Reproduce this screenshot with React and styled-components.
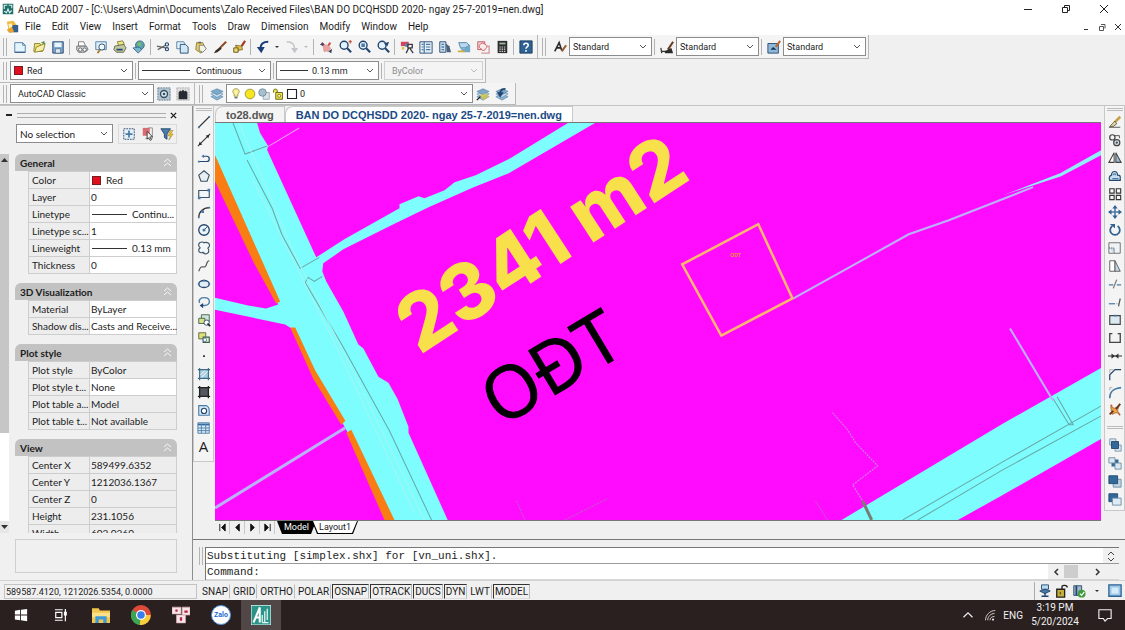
import React from "react";
import styled, { createGlobalStyle } from "styled-components";

const GlobalStyle = createGlobalStyle`
  * {
    box-sizing: border-box;
  }
  body {
    margin: 0;
    background: #f0f0f0;
    color: #1c1c1c;
    font-family: Roboto, "Open Sans", "Noto Sans", sans-serif;
    font-size: 10px;
  }
  button,
  select,
  input {
    font: inherit;
    color: inherit;
    margin: 0;
    padding: 0;
    border: 0;
    background: none;
    border-radius: 0;
  }
  svg {
    display: block;
    flex: none;
  }
`;

/* ---------- icons, all drawn on a 16 x 16 grid ---------- */

const navy = "#24466e";
const steel = "#4a7ba6";
const sky = "#b9dcf2";
const gold = "#c9b23a";

const layersShape = (
  <>
    <path d="M1 11l7-3 7 3-7 4z" fill="#8fb4cf" stroke={steel} strokeWidth=".6" />
    <path d="M1 8l7-3 7 3-7 4z" fill="#c4dcec" stroke={steel} strokeWidth=".6" />
    <path d="M1 5l7-3 7 3-7 4z" fill="#7ea8c6" stroke={steel} strokeWidth=".6" />
  </>
);

const glass = (
  <>
    <circle cx="7" cy="6" r="4.5" fill="#e3f2fc" stroke={navy} strokeWidth="1.6" />
    <path d="M10.5 9.5L15 14" stroke={navy} strokeWidth="2.4" />
  </>
);

const icons = {
  app: (
    <>
      <path d="M1 1h14v14H1z" fill="#1f6e68" />
      <path d="M3 8V3h4M9 3h4v4M3 11l3 2 2-5 2 5 3-3" fill="none" stroke="#d9f1ee" strokeWidth="1.5" />
    </>
  ),
  drawing: (
    <>
      <path d="M1 2l8-1 5 6v8H4z" fill="#efb93f" />
      <path d="M8 6h7v9H5z" fill="#34618f" />
      <path d="M1 12l6-4 3 6-6 2z" fill="#e9a22f" />
      <path d="M3 5l4-1 1 4-4 2z" fill="#fff3bd" />
    </>
  ),
  new: (
    <>
      <path d="M2 3h9l3 3v8H2z" fill="#e3f4fb" stroke={steel} />
      <path d="M2 14h12" stroke={navy} />
      <path d="M11 3v3h3" fill="none" stroke={steel} />
    </>
  ),
  open: (
    <>
      <path d="M3 4h6l1 2h3l-1 7H2z" fill="#eadf79" stroke="#8a7f22" />
      <path d="M5 8l10-4-2 8-10 2z" fill="#f5efab" stroke="#8a7f22" />
      <path d="M10 3l4-2 1 4z" fill="#56913e" />
    </>
  ),
  save: (
    <>
      <path d="M2 2h12v13H2z" fill="#7fa8d0" stroke={navy} />
      <path d="M4 3h8v5H4z" fill="#eaf4fb" />
      <path d="M5 10h6v5H5z" fill="#dfe6ec" stroke={navy} strokeWidth=".6" />
    </>
  ),
  print: (
    <>
      <path d="M4 2h6l2 5H4z" fill="#fff" stroke="#777" />
      <path d="M2 7h11l2 4-4 3H4l-2-3z" fill="#d5d9dd" stroke="#666" />
      <circle cx="6" cy="11" r="2" fill="#fff" stroke="#555" />
      <circle cx="11" cy="11" r="2" fill="#fff" stroke="#555" />
    </>
  ),
  preview: (
    <>
      <path d="M2 2h12v9H2z" fill="#dceffa" stroke={steel} />
      <circle cx="9" cy="8" r="3.5" fill="#f4fbff" stroke={navy} />
      <path d="M7 11l-3 4" stroke="#b07a33" strokeWidth="2" />
    </>
  ),
  publish: (
    <>
      <path d="M5 2l6-1 2 4-6 3z" fill="#efe58a" stroke="#7e7520" />
      <path d="M2 7l10-2 3 4-3 5H4l-3-3z" fill="#c2c8a4" stroke="#5c6040" />
      <path d="M4 11h7" stroke={navy} strokeWidth="2" />
    </>
  ),
  globe: (
    <>
      <circle cx="9" cy="6" r="5" fill="#5b9fb5" stroke="#376c77" />
      <path d="M6 4l3-2 2 3-3 3z" fill="#7dbf69" />
      <path d="M1 9l7-1 3 3-4 4z" fill="#78b7cd" stroke={navy} strokeWidth=".7" />
    </>
  ),
  cut: (
    <>
      <path d="M1 7l10 2M2 11l9-5" stroke="#666" strokeWidth="1.5" />
      <circle cx="12.5" cy="5" r="1.8" fill="none" stroke={navy} strokeWidth="1.3" />
      <circle cx="12.5" cy="10.5" r="1.8" fill="none" stroke={navy} strokeWidth="1.3" />
    </>
  ),
  copy: (
    <>
      <path d="M2 2h8l1 2v6H2z" fill="#e4f3fb" stroke={steel} />
      <path d="M6 5h6l3 3v7H6z" fill="#cfe6f4" stroke={navy} />
    </>
  ),
  paste: (
    <>
      <path d="M3 3h7l3 7-5 5-6-4z" fill="#e3cf6a" stroke="#8a7a2b" />
      <path d="M6 6h5l3 4-4 4-4-2z" fill="#f2f4e4" stroke="#777" />
      <path d="M5 2h3v2H5z" fill="#666" />
    </>
  ),
  brush: (
    <>
      <path d="M15 2L8 9" stroke="#8c4a22" strokeWidth="2.4" />
      <path d="M8 8l2 2-5 4-4 1 2-3z" fill="#3b2c22" />
    </>
  ),
  match: (
    <>
      <path d="M15 1l-4 6" stroke="#a63a25" strokeWidth="2.6" />
      <path d="M4 6l7 1 1 4-6 1z" fill="#e9bf45" stroke="#5e4d16" strokeWidth=".8" />
      <path d="M2 9h5v5H2z" fill="#efd977" stroke="#5e4d16" />
    </>
  ),
  undo: (
    <>
      <path d="M14 2C8 2 5 5 5 10" fill="none" stroke="#1e3d78" strokeWidth="2.4" />
      <path d="M1 8h9l-4 7z" fill="#1e3d78" />
    </>
  ),
  redo: (
    <>
      <path d="M2 2c6 0 9 3 9 8" fill="none" stroke="#c2c5c9" strokeWidth="1.8" />
      <path d="M7 9h8l-4 6z" fill="#c2c5c9" />
    </>
  ),
  pan: (
    <>
      <path d="M3 3l10 10M13 3L6 13" stroke="#d05454" strokeWidth="2.4" />
      <path d="M4 6l5-1 5 4-3 5-6-2z" fill="#e9a3a0" />
      <path d="M1 5l4-2v4zM15 10l-4 3 3 2z" fill={navy} />
    </>
  ),
  zoomRt: (
    <>
      {glass}
      <path d="M12 2h4M14 0v4" stroke="#c9503a" strokeWidth="1.3" />
    </>
  ),
  zoomWin: (
    <>
      {glass}
      <path d="M5 4h4v4H5z" fill={steel} />
    </>
  ),
  zoomPrev: (
    <>
      {glass}
      <path d="M15 2L9 4l4 3z" fill={navy} />
    </>
  ),
  props: (
    <>
      <path d="M1 2h9v5H1z" fill="#d2455c" />
      <path d="M2 8h3v3H2z" fill="#ddc34a" />
      <path d="M6 4h3v4H6z" fill="#5587c7" />
      <path d="M9 5h5v4H9zM10 9l-3 6M11 9l4 6" fill="none" stroke="#3b3f45" strokeWidth="1.5" />
    </>
  ),
  center: (
    <>
      <path d="M1 2h14v13H1z" fill="#e6eff5" stroke={navy} />
      <path d="M6 2v13M8 5h5M8 8h5M8 11h5M3 5h2M3 8h2M3 11h2" stroke={steel} strokeWidth="1.4" />
    </>
  ),
  palettes: (
    <>
      <path d="M2 2h7v12H2z" fill="#cfe1ee" stroke={navy} />
      <path d="M4 5h3M4 8h3M4 11h3" stroke={steel} strokeWidth="1.5" />
      <path d="M9 4l4 3 2 7h-5z" fill="#4a617a" />
    </>
  ),
  sheets: (
    <>
      <path d="M2 3h9l3 3-5 3H4z" fill="#b9d8ea" stroke={steel} />
      <path d="M3 8l5 2 7-5v9H7z" fill="#6fa8cb" />
      <path d="M1 13h8" stroke="#d1ad3e" strokeWidth="2" />
    </>
  ),
  markup: (
    <>
      <path d="M2 2h8v9H2z" fill="#f3d5d7" stroke="#c1505a" />
      <path d="M5 5c1-2 4-2 5 0 3 0 3 4 1 5-1 3-5 2-5 0-3-1-3-4-1-5z" fill="#fbeaea" stroke="#c1505a" />
      <path d="M12 7h3v8H6" fill="none" stroke="#d4969a" strokeWidth="1.5" />
    </>
  ),
  calc: (
    <>
      <path d="M3 1h11v14H3z" fill="#2d2d2d" />
      <path d="M5 3h7v2H5z" fill="#9fb7a3" />
      <path d="M5 8h7M5 10.5h7M5 13h7" stroke="#d2d2d2" strokeDasharray="1.6 1" strokeWidth="1.4" />
    </>
  ),
  help: (
    <>
      <path d="M1 1h14v14H1z" fill="#2d6293" stroke="#17395e" />
      <path d="M5.5 6c0-3 5-3 5 0 0 2-2.5 1.8-2.5 4M8 11.5v2" fill="none" stroke="#fff" strokeWidth="1.8" />
    </>
  ),
  textStyle: (
    <>
      <path d="M2 13L7 3l3 9M4 9h5" fill="none" stroke="#2a2a2a" strokeWidth="1.8" />
      <path d="M15 6l-5 7" stroke="#9b5a31" strokeWidth="2.4" />
    </>
  ),
  dimStyle: (
    <>
      <path d="M1 13h8M1 9l1 6" stroke="#333" strokeWidth="1.4" />
      <path d="M15 2L9 11" stroke="#6c3e27" strokeWidth="2.4" />
      <path d="M5 13l8-4 2 6H6z" fill="#2a2a2a" />
    </>
  ),
  tableStyle: (
    <>
      <path d="M1 4h12v11H1z" fill="#8fb8d8" stroke={navy} />
      <path d="M4 11l3-3 4 3z" fill="#16324f" />
      <path d="M15 1l-5 7" stroke="#b56c35" strokeWidth="2.4" />
    </>
  ),
  gear: (
    <>
      <path d="M1 1h14v14H1z" fill="#b6c6d1" stroke="#5c7588" strokeDasharray="2 1" />
      <circle cx="8" cy="8" r="4" fill="#dfeaf1" stroke="#354f63" strokeWidth="1.6" />
      <circle cx="8" cy="8" r="1.5" fill="#354f63" />
    </>
  ),
  workspace: (
    <>
      <path d="M1 1h14v14H1z" fill="#ddd" stroke="#a7a7a7" strokeDasharray="2 1" />
      <path d="M3 6l2-2 1 1 2-2 2 2 1-1 2 2v8H3z" fill="#262b31" />
    </>
  ),
  layers: layersShape,
  layerPrev: (
    <>
      {layersShape}
      <path d="M4 9l8-2 3 4-7 4z" fill="#d4c64a" opacity=".8" />
      <path d="M1 15l4-4" stroke="#222" strokeWidth="1.6" />
    </>
  ),
  layerBack: (
    <>
      {layersShape}
      <path d="M12 2C8 2 6 4 6 7" fill="none" stroke={navy} strokeWidth="2" />
      <path d="M2 6h8l-4 6z" fill={navy} />
    </>
  ),
  bulb: (
    <>
      <path d="M8 1c5 0 5 5 2.5 7v3h-5V8C3 6 3 1 8 1z" fill="#fbf39a" stroke="#8b8330" />
      <path d="M6 13h4" stroke="#777" strokeWidth="2" />
    </>
  ),
  sun: <circle cx="8" cy="8" r="6.5" fill="#f5e620" stroke="#8b8330" />,
  freeze: (
    <>
      <path d="M7 6h8v9H7z" fill="#dbe4ea" stroke="#8a98a2" />
      <circle cx="6" cy="6" r="5" fill="#a8bfce" stroke="#637f93" />
    </>
  ),
  unlock: (
    <>
      <path d="M2 6V3c0-2 5-2 5 0v3M5 6h9v9H5z" fill="#ece24b" stroke="#6f6a1a" strokeWidth="1.3" />
      <circle cx="9.5" cy="10.5" r="2" fill="#fff9b0" stroke="#6f6a1a" />
    </>
  ),
  box: <path d="M2 2h12v12H2z" fill="#fff" stroke="#222" strokeWidth="1.5" />,
  pickAdd: (
    <>
      <path d="M2 2h12v12H2z" fill="#e5f1f8" stroke={navy} strokeDasharray="2 1" />
      <path d="M8 4v8M4 8h8" stroke={steel} strokeWidth="2" />
    </>
  ),
  pick: (
    <>
      <path d="M2 1h8v9H2z" fill="#d34b53" opacity=".8" />
      <path d="M8 1h5v12H5" fill="none" stroke="#888" />
      <path d="M7 5l6 6-3 .5 2 3-1.5.8-2-3L7 14z" fill="#f8f8f8" stroke="#333" />
    </>
  ),
  quick: (
    <>
      <path d="M1 2h11l-4 6v6l-3-2V8z" fill={steel} stroke={navy} />
      <path d="M12 4l-3 6h3l-2 5 5-7h-3l3-4z" fill="#f1c232" stroke="#8a6b10" strokeWidth=".5" />
    </>
  ),
  line: (
    <>
      <path d="M2 14L14 2" stroke="#333" strokeWidth="1.3" />
      <path d="M1 13h2v2H1zM13 1h2v2h-2z" fill={steel} />
    </>
  ),
  xline: (
    <>
      <path d="M1 15L15 1" stroke="#333" strokeWidth="1.3" />
      <path d="M3 10l3 3-4 1zM10 3l3 3 1-4z" fill="#222" />
    </>
  ),
  pline: (
    <>
      <path d="M2 12h9c4 0 4-6 0-6H8" fill="none" stroke={navy} strokeWidth="1.4" />
      <path d="M1 11h2v2H1zM8 4v4L5 6z" fill={steel} />
    </>
  ),
  polygon: <path d="M8 2l6 5-2.5 7h-7L2 7z" fill="#e7eff4" stroke="#3c5264" strokeWidth="1.3" />,
  rect: (
    <>
      <path d="M2 4h12v8H2z" fill="#f2f7fa" stroke="#3c5264" strokeWidth="1.3" />
      <path d="M1 11h3v3H1zM12 2h3v3h-3z" fill={steel} />
    </>
  ),
  arc: (
    <>
      <path d="M2 14C2 8 7 3 14 3" fill="none" stroke="#333" strokeWidth="1.4" />
      <path d="M1 13h2v2H1zM5 6h3v3H5zM13 2h2v2h-2z" fill={steel} />
    </>
  ),
  circle: (
    <>
      <circle cx="8" cy="8" r="6" fill="#eff6fa" stroke={navy} strokeWidth="1.5" />
      <path d="M8 8l4-4" stroke={navy} />
      <circle cx="8" cy="8" r="1.8" fill={steel} />
    </>
  ),
  cloud: (
    <path
      d="M3 2c2-1 4-1 5 0 2-1 6 0 6 2 1 2-1 4-2 4 2 1 2 5 0 6-2 1-4 1-5-1-2 1-5 0-5-2s1-3 2-3C2 7 1 4 3 2z"
      fill="#f2f6f8"
      stroke="#3c5264"
      strokeWidth="1.3"
    />
  ),
  spline: <path d="M2 14c3-8 4-4 7-5s1-7 5-7" fill="none" stroke="#555" strokeWidth="1.4" />,
  ellipse: (
    <>
      <ellipse cx="8" cy="8" rx="6" ry="4" fill="#e3eff6" stroke={navy} strokeWidth="1.5" />
      <path d="M1 7h2v2H1zM13 7h2v2h-2zM7 3h2v2H7z" fill={steel} />
    </>
  ),
  ellipseArc: (
    <>
      <path d="M3 9C1 5 5 3 8 3c8 0 8 8 1 9H6" fill="none" stroke={steel} strokeWidth="1.5" />
      <path d="M7 9v6l-4-3z" fill={navy} />
    </>
  ),
  insert: (
    <>
      <path d="M5 2h9v8H5z" fill="#cfe6d9" stroke="#3d5c50" />
      <path d="M2 6h7v6H2z" fill="#d9df82" stroke="#3d5c50" />
      <circle cx="11" cy="11" r="3" fill="#fff" stroke={navy} />
      <path d="M12 12l3 3" stroke="#222" strokeWidth="2" />
    </>
  ),
  block: (
    <>
      <path d="M2 2h8v7H2z" fill="#dce27d" stroke="#5b6030" />
      <path d="M7 7h7v6H7z" fill="#eef1c8" stroke="#3d5c50" strokeWidth="1.3" />
      <circle cx="9" cy="10" r="2" fill="#fff" stroke={steel} />
    </>
  ),
  point: <path d="M7 7h2v2H7z" fill="#222" />,
  hatch: (
    <>
      <path d="M3 3h10v10H3z" fill="#a9cfe0" />
      <path d="M3 1v14M13 1v14M1 3h14M1 13h14" stroke="#3b6a88" strokeWidth="1.3" />
      <path d="M4 9l5-5M5 12l7-7" stroke="#fff" />
    </>
  ),
  gradient: (
    <>
      <path d="M3 3h10v10H3z" fill="#55585c" />
      <path d="M3 1v14M13 1v14M1 3h14M1 13h14" stroke="#222" strokeWidth="1.5" />
    </>
  ),
  region: (
    <>
      <path d="M2 3h9c3 2 3 3 3 11H2z" fill="#d7eaf5" stroke={steel} strokeWidth="1.3" />
      <circle cx="8" cy="9" r="3" fill="#fff" stroke={navy} strokeWidth="1.3" />
    </>
  ),
  table: (
    <>
      <path d="M1 2h13v12H1z" fill="#d7e9f6" stroke={steel} />
      <path d="M1 4h13" stroke="#3368a3" strokeWidth="2" />
      <path d="M1 8h13M1 11h13M5 3v11M10 3v11" stroke={steel} />
    </>
  ),
  erase: (
    <>
      <path d="M14 2L7 9" stroke="#c8a04a" strokeWidth="3" />
      <path d="M8 7l2 3-4 3H2z" fill="#ddd6b0" stroke="#655c32" />
      <path d="M1 14h13" stroke="#444" />
    </>
  ),
  copyObj: (
    <>
      <circle cx="5" cy="5" r="3" fill="none" stroke="#444" strokeWidth="1.4" />
      <path d="M8 3h5v3" fill="none" stroke="#444" />
      <circle cx="10" cy="11" r="3.5" fill="#d7e5ee" stroke="#444" strokeWidth="1.4" />
      <circle cx="10" cy="11" r="1.3" fill="#444" />
    </>
  ),
  mirror: (
    <>
      <path d="M7 2v11H1z" fill="#fff" stroke="#444" strokeWidth="1.2" />
      <path d="M9 2v11h6z" fill="#9dc0d6" stroke="#444" strokeWidth="1.2" />
    </>
  ),
  offset: (
    <>
      <path d="M2 13h12V9c0-2-3-2-3-2 0-6-7-5-7 0-3 1-3 4-2 6z" fill="#c7dfee" stroke={navy} strokeWidth="1.3" />
      <path d="M5 11h7M6 7c0-2 3-2 3 0" fill="none" stroke={steel} strokeWidth="1.3" />
    </>
  ),
  array: (
    <path d="M2 2h5v5H2zM9.5 2h5v5h-5zM2 9.5h5v5H2zM9.5 9.5h5v5h-5z" fill="#f8fafb" stroke="#333" strokeWidth="1.3" />
  ),
  move: (
    <>
      <path d="M8 3v10M3 8h10" stroke={steel} strokeWidth="1.8" />
      <path d="M8 0l3 4H5zM8 16l3-4H5zM0 8l4-3v6zM16 8l-4-3v6z" fill="#34618f" />
    </>
  ),
  rotate: (
    <>
      <path d="M5 3.5A5.5 5.5 0 1 0 11 3.5" fill="none" stroke="#34618f" strokeWidth="2" />
      <path d="M2 1h6v5z" fill="#34618f" />
    </>
  ),
  scale: (
    <>
      <path d="M1 2h13v12H1z" fill="#eef3f6" stroke="#666" />
      <path d="M1 8h6v6" fill="#cbdde9" stroke="#444" strokeDasharray="1.5 1" />
    </>
  ),
  stretch: (
    <>
      <path d="M2 2h6v12H2z" fill="#fff" stroke="#555" />
      <path d="M8 2l6 12H8z" fill="#c2d8e6" stroke="#555" />
    </>
  ),
  trim: (
    <>
      <path d="M1 9h5M10 9h5" stroke={steel} strokeWidth="1.4" />
      <path d="M10 3L6 13" stroke="#777" strokeWidth="1.4" />
    </>
  ),
  extend: (
    <>
      <path d="M1 10h7" stroke={steel} strokeWidth="1.4" />
      <path d="M9 10h3" stroke="#888" strokeDasharray="1 1" />
      <path d="M14 4l-2 9" stroke="#555" strokeWidth="1.4" />
    </>
  ),
  breakPt: (
    <>
      <path d="M2 3h12v10H2z" fill="#dbe9f2" stroke="#444" strokeWidth="1.3" />
      <path d="M7 2h3v2H7z" fill={steel} />
    </>
  ),
  breakObj: <path d="M5 3H2v10h12V3h-3" fill="none" stroke="#444" strokeWidth="1.5" />,
  join: (
    <>
      <path d="M0 8h16" stroke="#333" strokeWidth="1.2" />
      <path d="M4 5l4 3-4 3zM12 5L8 8l4 3z" fill="#333" />
    </>
  ),
  chamfer: (
    <>
      <path d="M2 15V9l6-6h7" fill="none" stroke={navy} strokeWidth="1.4" />
      <path d="M2 7V3h4" fill="none" stroke="#aaa" />
    </>
  ),
  fillet: (
    <>
      <path d="M2 15c0-7 3-11 13-12" fill="none" stroke={steel} strokeWidth="1.8" />
      <path d="M2 6V3h3" fill="none" stroke="#aaa" />
    </>
  ),
  explode: (
    <>
      <path d="M3 4l4 2 5-2-1 5 2 3-4-1-4 2-1-3z" fill="#eaa14d" stroke="#9b5a20" strokeWidth=".8" />
      <path d="M14 1L9 7M2 13l4-4" stroke="#6b3418" strokeWidth="2.2" />
      <path d="M3 2l2 2M12 12l2 2" stroke="#c8482c" strokeWidth="1.4" />
    </>
  ),
  front: (
    <>
      <path d="M2 1h7v7H2zM8 8h7v7H8z" fill="#dbe7ef" stroke="#7693a8" />
      <path d="M4 4h8v8H4z" fill="#31699a" stroke={navy} />
    </>
  ),
  back: (
    <>
      <path d="M4 4h8v8H4z" fill="#31699a" />
      <path d="M1 2h7v6H1zM8 8h7v7H8z" fill="#dbe7ef" stroke="#6b8ba2" />
    </>
  ),
  above: (
    <>
      <path d="M6 6h9v9H6z" fill="#bcd3e2" stroke="#6b8ba2" />
      <path d="M1 2h10v9H1z" fill="#31699a" stroke={navy} />
    </>
  ),
  under: (
    <>
      <path d="M1 2h10v9H1z" fill="#31699a" stroke={navy} />
      <path d="M5 7h10v8H5z" fill="#dcebf5" stroke="#6b8ba2" />
    </>
  ),
  comm: (
    <>
      <path d="M4 1h8v5H4z" fill={sky} stroke={navy} />
      <path d="M2 8l6-2 6 2-6 3z" fill={steel} stroke={navy} />
      <path d="M8 10v4M4 14h8" stroke={navy} strokeWidth="1.6" />
    </>
  ),
  lock: (
    <>
      <path d="M8 7V3c0-2 6-2 6 1" fill="none" stroke="#222" strokeWidth="1.6" />
      <path d="M2 6h9v9H2z" fill={gold} stroke="#222" strokeWidth="1.5" />
      <path d="M6 9v3" stroke="#222" />
    </>
  ),
  trusted: (
    <>
      <path d="M2 2h9v11H2z" fill="#9fb6c6" stroke={navy} />
      <path d="M5 2v11" stroke={navy} strokeWidth="2" />
      <circle cx="11" cy="11" r="4.5" fill="#3c9b3c" />
      <path d="M9 11l2 2 3-4" fill="none" stroke="#fff" strokeWidth="1.4" />
    </>
  ),
  clean: (
    <>
      <path d="M1 1h14v13H1z" fill="#9cc8e8" stroke="#2c6294" strokeWidth="1.5" />
      <path d="M4 4h8v7H4z" fill="#d6ebf8" />
    </>
  ),
  windows: <path d="M1 3l6-1v5.5H1zM8 2l7-1v6.5H8zM1 8.5h6V14l-6-1zM8 8.5h7V15l-7-1z" fill="#fff" />,
  taskview: (
    <path d="M1 2h9M2 5h7v6H2zM1 14h9M13 1v14M12 5h2v3h-2z" fill="none" stroke="#fff" strokeWidth="1.4" />
  ),
  explorer: (
    <>
      <path d="M0 2h6l1 2h9v11H0z" fill="#f3c64f" />
      <path d="M0 6h16v4H0z" fill="#fbe08a" />
      <path d="M3 9h10v6h-3v-3H6v3H3z" fill="#3f9bd8" />
    </>
  ),
  chrome: (
    <>
      <circle cx="8" cy="8" r="8" fill="#de4a3a" />
      <path d="M8 8L1 4a8 8 0 0 0 6 12z" fill="#3aa655" />
      <path d="M8 8h7.7A8 8 0 0 1 7 16z" fill="#f7cf3a" />
      <circle cx="8" cy="8" r="4" fill="#fff" />
      <circle cx="8" cy="8" r="3" fill="#3b7ded" />
    </>
  ),
  blocks: (
    <>
      <path d="M0 1h8v6H0zM9 1h7v7H9zM4 8h8v7H4z" fill="#f5e5e8" stroke="#d9a9b2" strokeWidth=".6" />
      <path d="M3 3h2v2H3zM11 4h3v2h-3zM7 10h2v3H7z" fill="#b72743" />
    </>
  ),
  cad: (
    <>
      <path d="M0 0h16v16H0z" fill="#2b9488" stroke="#d8f2ee" />
      <path d="M2 14L7 2v12M3 10h4" fill="none" stroke="#fff" strokeWidth="1.6" />
      <path d="M9 8v6M11 5v9M13 3v9M9 14h5" fill="none" stroke="#e4f6f3" />
    </>
  ),
  up: <path d="M2 11l6-6 6 6" fill="none" stroke="#f2f2f2" strokeWidth="1.5" />,
  wifi: (
    <>
      <path d="M2 15C2 8 8 2 15 2M5 15c0-5 4-9 9-9M8 15c0-3 2-5 6-5" fill="none" stroke="#ddd" strokeWidth="1.2" />
      <circle cx="12" cy="14" r="1.5" fill="#ddd" />
    </>
  ),
  chat: <path d="M1 2h14v10h-4l-3 3-2-3H1z" fill="none" stroke="#f2f2f2" strokeWidth="1.3" />,
};

const Icon = ({ name, size = 14 }) => (
  <svg width={size} height={size} viewBox="0 0 16 16" aria-hidden="true">
    {icons[name]}
  </svg>
);

const Chevron = ({ color = "#555" }) => (
  <svg width="8" height="5" viewBox="0 0 8 5" aria-hidden="true">
    <path d="M1 1l3 3 3-3" fill="none" stroke={color} />
  </svg>
);

/* ---------- shell ---------- */

const Window = styled.div`
  display: flex;
  flex-direction: column;
  min-height: 100vh;
`;

const TitleBar = styled.header`
  display: flex;
  align-items: center;
  height: 18px;
  padding: 0 16px 0 2px;
  gap: 4px;
  background: #fff;
`;

const Title = styled.h1`
  flex: 1;
  margin: 0;
  font-size: 10px;
  font-weight: 400;
  white-space: nowrap;
`;

const WindowButtons = styled.div`
  display: flex;
  gap: ${(p) => p.$gap}px;
`;

const MenuBar = styled.nav`
  display: flex;
  align-items: center;
  height: 17px;
  padding: 0 3px 0 6px;
  background: #fff;
`;

const MenuList = styled.div`
  display: flex;
  flex: 1;
  gap: 11px;
  padding-left: 6px;
`;

const PlainButton = styled.button`
  display: flex;
  align-items: center;
  justify-content: center;
`;

const ToolRow = styled.div`
  display: flex;
  align-items: stretch;
  height: ${(p) => p.$height || 24}px;
`;

const ToolBar = styled.div`
  display: flex;
  align-items: center;
  padding-right: ${(p) => p.$end || 2}px;
  border: 1px solid #b9b9b9;
  border-width: 0 1px 1px 0;
  background: #f4f4f4;
`;

const Grip = styled.span`
  flex: none;
  width: 4px;
  height: 18px;
  margin: 0 ${(p) => p.$gap || 2}px;
  border: 1px solid #b4b4b4;
  border-width: 0 1px;
`;

const Divider = styled.span`
  flex: none;
  width: 1px;
  height: 16px;
  margin: 0 2px;
  background: #b4b4b4;
`;

const ToolButton = styled.button`
  display: flex;
  flex: none;
  align-items: center;
  justify-content: center;
  width: ${(p) => p.$width || 19}px;
  height: 18px;
`;

const SmallArrow = styled.span`
  border: 2px solid transparent;
  border-top-color: ${(p) => p.$color || "#333"};
  border-bottom: 0;
`;

const Combo = styled.label`
  display: flex;
  flex: none;
  align-items: center;
  gap: ${(p) => p.$gap || 0}px;
  width: ${(p) => p.$width}px;
  height: 19px;
  padding: 0 4px 0 ${(p) => p.$inset || 3}px;
  border: 1px solid ${(p) => (p.$dim ? "#cfcfcf" : "#8c8c8c")};
  background: ${(p) => (p.$dim ? "#f4f4f4" : "#fff")};
  color: ${(p) => (p.$dim ? "#8c8c8c" : "inherit")};

  select {
    flex: 1;
    min-width: 0;
    appearance: none;
    font-size: ${(p) => (p.$large ? 10 : 9)}px;
    opacity: 1;
  }
`;

const Swatch = styled.span`
  flex: none;
  width: 9px;
  height: 9px;
  border: 1px solid #7a1b20;
  background: #e0101c;
`;

const Rule = styled.span`
  flex: none;
  width: ${(p) => p.$width}px;
  height: 1px;
  background: #333;
`;

const ComboBox = ({ label, value, width, gap, inset, dim, large, children }) => (
  <Combo $width={width} $gap={gap} $inset={inset} $dim={dim} $large={large}>
    {children}
    <select aria-label={label} defaultValue={value} disabled={dim}>
      <option>{value}</option>
    </select>
    <Chevron color={dim ? "#bbb" : "#555"} />
  </Combo>
);

/* ---------- work area ---------- */

const WorkArea = styled.div`
  display: flex;
  flex: 1;
  border-top: 1px solid #c4c4c4;
`;

const Palette = styled.aside`
  display: flex;
  flex: none;
  flex-direction: column;
  width: 193px;
  padding-right: 15px;
  border-right: 1px solid #8e8e8e;
  font-family: Lato, "Open Sans", sans-serif;
`;

const PaletteHead = styled.div`
  display: flex;
  align-items: center;
  gap: 4px;
  height: 18px;
  padding: 0 0 0 5px;
`;

const DragBar = styled.span`
  flex: 1;
  height: 5px;
  border: 1px solid #adadad;
  border-width: 1px 0;
`;

const SelectionRow = styled.div`
  display: flex;
  justify-content: space-between;
  padding: 0 0 10px 16px;
`;

const SelectionTools = styled.div`
  display: flex;
  border: 1px solid #dadada;
`;

const PaletteBody = styled.div`
  display: flex;
  flex: 1 1 0;
  min-height: 0;
  overflow: hidden;
`;

const ScrollTrack = styled.div`
  display: flex;
  flex: none;
  flex-direction: column;
  align-items: center;
  width: 9px;
  margin-right: 6px;
  background: #fff;
`;

const ScrollThumb = styled.span`
  width: 9px;
  height: ${(p) => p.$height}px;
  background: #c6c6c6;
`;

const ScrollButton = styled.button`
  display: flex;
  align-items: center;
  justify-content: center;
  width: 9px;
  height: 12px;
  background: ${(p) => p.$fill || "#e6e6e6"};
`;

const Groups = styled.div`
  flex: 1;
  min-width: 0;
  height: 0;
`;

const Group = styled.section`
  margin-bottom: 9px;
`;

const GroupHead = styled.h2`
  display: flex;
  align-items: center;
  justify-content: space-between;
  height: 17px;
  margin: 0;
  padding: 0 5px;
  border-radius: 6px 6px 0 0;
  background: #c2c2c2;
  font-size: 10px;
  font-weight: 700;
`;

const PropTable = styled.table`
  width: 149px;
  margin-left: 13px;
  border-collapse: collapse;
  table-layout: fixed;

  th,
  td {
    height: 17px;
    padding: 0 1px;
    border: 1px solid #cdcdcd;
    font-weight: 400;
    line-height: 14px;
    text-align: left;
    white-space: nowrap;
  }
  th {
    width: 61px;
    padding-left: 3px;
    padding-right: 0;
    background: #ededed;
  }
`;

const PropValue = styled.td`
  background: ${(p) => (p.$locked ? "#ededed" : "#fff")};
`;

const PropInner = styled.div`
  display: flex;
  align-items: center;
  gap: 5px;
  padding-left: 1px;
`;

const PropInput = styled.input`
  display: block;
  width: 100%;
  height: 14px;
`;

const Description = styled.div`
  height: 34px;
  margin: 6px 0 7px 15px;
  border: 1px solid #cfcfcf;
`;

const SideTools = styled.div`
  display: flex;
  flex: none;
  flex-direction: column;
  align-items: center;
  align-self: flex-start;
  width: 21px;
  padding-bottom: ${(p) => p.$end}px;
  border: 1px solid #c8c8c8;
  border-width: 0 1px 1px;
  background: #f4f4f4;
`;

const SideGrip = styled.span`
  width: 16px;
  height: 3px;
  margin: ${(p) => p.$gap || 2}px 0;
  border: 1px solid #bcbcbc;
  border-width: 1px 0;
`;

const SideButton = styled(ToolButton)`
  width: 18px;
`;

const RightColumn = styled.div`
  display: flex;
  flex: 1;
  flex-direction: column;
  min-width: 0;
`;

const DrawingRow = styled.div`
  display: flex;
  flex: 1;
`;

const Drawing = styled.main`
  display: flex;
  flex: 1;
  flex-direction: column;
  min-width: 0;
  margin: 0 3px 0 1px;
`;

const FileTabs = styled.div`
  display: flex;
  height: 17px;
  font-family: "Liberation Sans", Arial, sans-serif;
  font-size: 11px;
  font-weight: 700;
  border-bottom: 1px solid #777;
`;

const FileTab = styled.button`
  padding: 0 10px;
  border: 1px solid #c9c9c9;
  border-width: 1px 1px 0;
  border-radius: 8px 0 0 0;
  background: ${(p) => (p.$active ? "#fff" : "#f4f4f4")};
  color: ${(p) => (p.$active ? "#1c4a86" : "#555")};
  white-space: nowrap;
`;

const Canvas = styled.div`
  flex: 1 1 0;
  min-height: 0;
  overflow: hidden;
  background: #ff0cff;

  svg {
    width: 100%;
    height: 100%;
  }
`;

const LayoutTabs = styled.div`
  display: flex;
  height: 14px;
  border-top: 1px solid #777;
  font-size: 9px;
`;

const NavButton = styled.button`
  display: flex;
  align-items: center;
  justify-content: center;
  width: 15px;
  border-right: 1px solid #c9c9c9;
`;

const LayoutTab = styled.button`
  display: flex;
  margin-left: ${(p) => (p.$active ? 2 : -4)}px;
  padding: 0 1px 1px;
  background: #000;
  clip-path: polygon(0 0, 100% 0, calc(100% - 5px) 100%, 5px 100%);

  span {
    padding: 0 6px;
    line-height: 12px;
    background: ${(p) => (p.$active ? "#000" : "#fff")};
    color: ${(p) => (p.$active ? "#fff" : "#222")};
    clip-path: polygon(0 0, 100% 0, calc(100% - 5px) 100%, 5px 100%);
  }
`;

/* ---------- command line, status bar, task bar ---------- */

const CommandDock = styled.section`
  display: flex;
  margin-top: 5px;
  padding: 7px 6px 0 4px;
  border-top: 1px solid #777;
`;

const CommandBox = styled.div`
  flex: 1;
  border: 1px solid #777;
  border-right: 0;
  border-bottom: 0;
  background: #fff;
  font-family: "Liberation Mono", monospace;
  font-size: 11px;
`;

const CommandRow = styled.div`
  display: flex;
  align-items: center;
  justify-content: space-between;
  height: 16px;
  padding-left: 1px;
  border-bottom: 1px solid ${(p) => (p.$last ? "#d6d6d6" : "#9a9a9a")};
`;

const CommandInput = styled.label`
  display: flex;
  flex: 1;

  input {
    flex: 1;
    outline: 0;
  }
`;

const VScroll = styled.div`
  display: flex;
  flex-direction: column;
  align-items: center;
  justify-content: space-between;
  align-self: stretch;
  width: 16px;
  padding: 3px 0 1px;
  background: #f0f0f0;
`;

const HScroll = styled.div`
  display: flex;
  align-items: center;
  align-self: stretch;
  gap: 5px;
  padding: 0 18px 0 5px;
  background: #f0f0f0;

  span {
    width: 14px;
    height: 13px;
    background: #cdcdcd;
  }
  span + button {
    margin-left: 12px;
  }
`;

const StatusBar = styled.footer`
  display: flex;
  align-items: center;
  height: 20px;
  padding: 2px 3px 1px 4px;
  border-top: 1px solid #d3d3d3;
  font-size: 9px;
`;

const Coordinates = styled.output`
  width: 193px;
  height: 15px;
  line-height: 14px;
  padding-left: 1px;
  border: 1px solid #c3c3c3;
`;

const Toggles = styled.div`
  display: flex;
  flex: 1;
  gap: 1px;
  padding-left: 3px;
`;

const Toggle = styled.button`
  height: 15px;
  padding: 0 1px;
  border: 1px solid ${(p) => (p.$on ? "#333" : "transparent")};
  border-right-color: #bdbdbd;
  border-bottom-color: ${(p) => (p.$on ? "#ddd" : "transparent")};
  font-size: 10px;
  line-height: 13px;
`;

const StatusTray = styled.div`
  display: flex;
  align-items: center;
  gap: 3px;
  padding-left: 3px;
  border-left: 1px solid #aaa;
`;

const TaskBar = styled.footer`
  display: flex;
  align-items: stretch;
  height: 30px;
  padding-left: 1px;
  background: #2a201f;
  color: #f2f2f2;
`;

const TaskButton = styled.button`
  display: flex;
  align-items: center;
  justify-content: center;
  width: ${(p) => p.$width || 40}px;
  background: ${(p) => (p.$active ? "#514746" : "transparent")};
`;

const ZaloMark = styled.span`
  display: flex;
  align-items: center;
  justify-content: center;
  width: 20px;
  height: 20px;
  border: 1px solid #4d90dd;
  border-radius: 50%;
  background: #fff;
  color: #1c6ad0;
  font-size: 7px;
  font-weight: 700;
`;

const Spacer = styled.span`
  flex: 1;
`;

const Clock = styled.time`
  display: flex;
  flex-direction: column;
  justify-content: center;
  width: 60px;
  line-height: 14px;
  text-align: center;
`;

const Language = styled.span`
  align-self: center;
  padding: 0 2px;
`;

/* ---------- data ---------- */

const menus = ["File", "Edit", "View", "Insert", "Format", "Tools", "Draw", "Dimension", "Modify", "Window", "Help"];

const standardTools = [
  ["new", "open", "save"],
  ["print", "preview", "publish", "globe"],
  ["cut", "copy", "paste", "brush", "match"],
  ["undo", "redo"],
  ["pan", "zoomRt", "zoomWin", "zoomPrev"],
  ["props", "center", "palettes", "sheets", "markup", "calc"],
  ["help"],
];

const drawTools = [
  "line", "xline", "pline", "polygon", "rect", "arc", "circle", "cloud", "spline", "ellipse",
  "ellipseArc", "insert", "block", "point", "hatch", "gradient", "region", "table", "mtext",
];

const modifyTools = [
  "erase", "copyObj", "mirror", "offset", "array", "move", "rotate", "scale", "stretch", "trim",
  "extend", "breakPt", "breakObj", "join", "chamfer", "fillet", "explode",
];

const orderTools = ["front", "back", "above", "under"];

const groups = [
  {
    title: "General",
    rows: [
      { label: "Color", value: "Red", swatch: true },
      { label: "Layer", value: "0", edit: true },
      { label: "Linetype", value: "Continu...", rule: true },
      { label: "Linetype sc...", value: "1", edit: true },
      { label: "Lineweight", value: "0.13 mm", rule: true },
      { label: "Thickness", value: "0", edit: true },
    ],
  },
  {
    title: "3D Visualization",
    rows: [
      { label: "Material", value: "ByLayer" },
      { label: "Shadow dis...", value: "Casts and Receive..." },
    ],
  },
  {
    title: "Plot style",
    rows: [
      { label: "Plot style", value: "ByColor", locked: true },
      { label: "Plot style t...", value: "None" },
      { label: "Plot table a...", value: "Model", locked: true },
      { label: "Plot table t...", value: "Not available", locked: true },
    ],
  },
  {
    title: "View",
    rows: [
      { label: "Center X", value: "589499.6352", locked: true },
      { label: "Center Y", value: "1212036.1367", locked: true },
      { label: "Center Z", value: "0", locked: true },
      { label: "Height", value: "231.1056", locked: true },
      { label: "Width", value: "602.0260", locked: true },
    ],
  },
];

const toggles = [
  ["SNAP", false],
  ["GRID", false],
  ["ORTHO", false],
  ["POLAR", false],
  ["OSNAP", true],
  ["OTRACK", true],
  ["DUCS", true],
  ["DYN", true],
  ["LWT", false],
  ["MODEL", true],
];

/* ---------- parts ---------- */

const MapDrawing = () => (
  <svg viewBox="216 123 886 396" preserveAspectRatio="xMinYMin slice" role="img" aria-label="Land use map">
    <g fill="#7dfdfd">
      <path d="M216 123h42l3 10 8 13-1 4 49 107 28-18 55-31 0-4 19-8 6 2 20-8 10-8 21-7 35-17 57-35h27l-86 50-35 14-45 20-35 17-50 25-20 14-1 8 4 10 17 30 15 33 5 4 15 28 10 6 9 16 11 28v6l40 89h-55l-46-90-5-9-29-50-20-43-8-5-71-15v-12l34 8 18 3 12-4-64-145z" />
      <path d="M841 519L1000 424l102-58v71l-102 58-43 24z" />
    </g>
    <g fill="#f97d12">
      <path d="M216 155l65 146-4 2-22-40-39-82z" />
      <path d="M291 327h5l20 43 30 50-4 4-28-46z" />
      <path d="M347 432l5-3 43 90h-10z" />
    </g>
    <g fill="none" stroke="#68a6a6" strokeWidth="1">
      <path d="M234 123l12 31 22-8M248 160l25 48 10 27 18 33 19-11" />
      <path d="M323 276l-8 5-6-4-3 5 37 63 47 85 42 89" />
      <path d="M902 519l98-57 102-58M917 519l83-49 102-56" />
      <path d="M1052 398l16 26h4l-16-28" />
    </g>
    <path d="M862 500l9 19" fill="none" stroke="#777f72" strokeWidth="3" />
    <path d="M240 123l55 130 65 130 65 136M254 180l80 160 80 170" fill="none" stroke="#a5f5f2" strokeWidth="1" />
    <g fill="none" stroke="#b9b3fb">
      <path d="M216 507l130-80" strokeWidth="3" />
      <path d="M793 298l115-64 40-14 84-33" strokeWidth="2" />
      <path d="M1009 328l43 72" strokeWidth="2" />
      <path d="M268 147l32-19" stroke="#e59bf5" strokeWidth="1" />
    </g>
    <path d="M1002 195l57-22 43-24v5l-42 22z" fill="#8ff0fb" />
    <g fill="none" stroke="#c68de0" strokeDasharray="2 1">
      <path d="M832 412l15 17 8 13 22 23-25 19 10 16" />
      <path d="M517 500l8 19M565 519l42-21M815 500l12 19" stroke="#c05ac8" />
    </g>
    <path d="M758 224l34 74-71 37-39-71z" fill="none" stroke="#ffb66e" strokeWidth="2.5" />
    <text x="730" y="257" fontFamily="Liberation Sans, sans-serif" fontSize="5" fontWeight="700" fill="#f3962b">
      ODT
    </text>
    <text
      transform="translate(420 355) rotate(-33)"
      fontFamily="Inter, sans-serif"
      fontSize="78"
      fontWeight="800"
      fill="#f8e04a"
    >
      2341 m2
    </text>
    <text
      transform="translate(501 427) rotate(-31)"
      fontFamily="Open Sans, sans-serif"
      fontSize="72"
      fill="#000"
      stroke="#000"
      strokeWidth="1"
    >
      OĐT
    </text>
  </svg>
);

const PropertyValue = ({ row }) => {
  if (row.edit) {
    return <PropInput aria-label={row.label} defaultValue={row.value} />;
  }
  if (row.swatch || row.rule) {
    return (
      <PropInner>
        {row.swatch ? <Swatch /> : <Rule $width={35} />}
        {row.value}
      </PropInner>
    );
  }
  return row.value;
};

const PropertyPalette = () => (
  <Palette aria-label="Properties">
    <PaletteHead>
      <PlainButton aria-label="Auto-hide">
        <svg width="8" height="8" viewBox="0 0 8 8">
          <path d="M1 4h6" stroke="#222" strokeWidth="2" />
        </svg>
      </PlainButton>
      <DragBar />
      <PlainButton aria-label="Close palette">
        <svg width="7" height="7" viewBox="0 0 8 8">
          <path d="M1 1l6 6M7 1L1 7" stroke="#222" strokeWidth="1.6" />
        </svg>
      </PlainButton>
    </PaletteHead>
    <SelectionRow>
      <ComboBox label="Selection" value="No selection" width={97} large />
      <SelectionTools>
        {["pickAdd", "pick", "quick"].map((name) => (
          <ToolButton key={name} aria-label={name}>
            <Icon name={name} />
          </ToolButton>
        ))}
      </SelectionTools>
    </SelectionRow>
    <PaletteBody>
      <ScrollTrack>
        <ScrollButton aria-label="Scroll up" $fill="#c6c6c6">
          <svg width="7" height="6" viewBox="0 0 7 6">
            <path d="M0 5h7L3.5 1z" fill="#333" />
          </svg>
        </ScrollButton>
        <ScrollThumb $height={267} />
        <Spacer />
        <ScrollButton aria-label="Scroll down">
          <svg width="7" height="6" viewBox="0 0 7 6">
            <path d="M0 1h7L3.5 5z" fill="#333" />
          </svg>
        </ScrollButton>
      </ScrollTrack>
      <Groups>
        {groups.map((group) => (
          <Group key={group.title}>
            <GroupHead>
              {group.title}
              <svg width="9" height="9" viewBox="0 0 9 9">
                <path d="M1 4l3.5-3L8 4M1 8l3.5-3L8 8" fill="none" stroke="#f7f7f7" />
              </svg>
            </GroupHead>
            <PropTable>
              <tbody>
                {group.rows.map((row) => (
                  <tr key={row.label}>
                    <th scope="row">{row.label}</th>
                    <PropValue $locked={row.locked}>
                      <PropertyValue row={row} />
                    </PropValue>
                  </tr>
                ))}
              </tbody>
            </PropTable>
          </Group>
        ))}
      </Groups>
    </PaletteBody>
    <Description />
  </Palette>
);

const TextTool = styled.span`
  font-family: "Open Sans", sans-serif;
  font-size: 15px;
`;

const SideTool = ({ name }) => (
  <SideButton aria-label={name}>{name === "mtext" ? <TextTool>A</TextTool> : <Icon name={name} />}</SideButton>
);

const StandardToolbar = () => (
  <ToolRow>
    <ToolBar>
      <Grip $gap={3} />
      {standardTools.map((set, i) => (
        <React.Fragment key={set[0]}>
          {i > 0 && <Divider />}
          {set.map((name) => (
            <React.Fragment key={name}>
              <ToolButton aria-label={name}>
                <Icon name={name} />
              </ToolButton>
              {set[0] === "undo" && (
                <ToolButton $width={10} aria-label={`${name} list`}>
                  <SmallArrow $color={name === "redo" ? "#bbb" : "#333"} />
                </ToolButton>
              )}
            </React.Fragment>
          ))}
        </React.Fragment>
      ))}
    </ToolBar>
    <ToolBar>
      <Grip $gap={4} />
      <ToolButton aria-label="Text style manager">
        <Icon name="textStyle" />
      </ToolButton>
      <ComboBox label="Text style" value="Standard" width={83} />
      <Divider />
      <ToolButton aria-label="Dimension style manager">
        <Icon name="dimStyle" />
      </ToolButton>
      <ComboBox label="Dimension style" value="Standard" width={83} />
      <Divider />
      <ToolButton aria-label="Table style manager">
        <Icon name="tableStyle" />
      </ToolButton>
      <ComboBox label="Table style" value="Standard" width={83} />
    </ToolBar>
  </ToolRow>
);

const PropertiesToolbar = () => (
  <ToolRow>
    <ToolBar>
      <Grip $gap={3} />
      <ComboBox label="Color control" value="Red" width={123} gap={4}>
        <Swatch />
      </ComboBox>
      <Divider />
      <ComboBox label="Linetype control" value="Continuous" width={133} gap={6}>
        <Rule $width={48} />
      </ComboBox>
      <Divider />
      <ComboBox label="Lineweight control" value="0.13 mm" width={103} gap={4}>
        <Rule $width={28} />
      </ComboBox>
      <Divider />
      <ComboBox label="Plot style control" value="ByColor" width={99} inset={7} dim />
    </ToolBar>
  </ToolRow>
);

const LayersToolbar = () => (
  <ToolRow $height={22}>
    <ToolBar>
      <Grip $gap={3} />
      <ComboBox label="Workspace" value="AutoCAD Classic" width={144} inset={7} />
      <ToolButton aria-label="Workspace settings">
        <Icon name="gear" />
      </ToolButton>
      <ToolButton aria-label="My workspace">
        <Icon name="workspace" />
      </ToolButton>
    </ToolBar>
    <ToolBar $end={4}>
      <Grip $gap={4} />
      <ToolButton aria-label="Layer properties manager">
        <Icon name="layers" />
      </ToolButton>
      <ComboBox label="Layer control" value="0" width={247} gap={2}>
        <Icon name="bulb" size={12} />
        <Icon name="sun" size={12} />
        <Icon name="freeze" size={12} />
        <Icon name="unlock" size={12} />
        <Icon name="box" size={12} />
      </ComboBox>
      <ToolButton aria-label="Make object's layer current">
        <Icon name="layerPrev" />
      </ToolButton>
      <ToolButton aria-label="Layer previous">
        <Icon name="layerBack" />
      </ToolButton>
    </ToolBar>
  </ToolRow>
);

const navShapes = ["M2 1v8M8 1L4 5l4 4z", "M7 1L3 5l4 4z", "M3 1l4 4-4 4z", "M2 1l4 4-4 4zM8 1v8"];

const CommandWindow = () => (
  <CommandDock>
    <Grip $gap={2} />
    <CommandBox>
      <CommandRow>
        Substituting [simplex.shx] for [vn_uni.shx].
        <VScroll>
          <svg width="8" height="5" viewBox="0 0 8 5">
            <path d="M1 4l3-3 3 3" fill="none" stroke="#444" />
          </svg>
          <Chevron color="#444" />
        </VScroll>
      </CommandRow>
      <CommandRow $last>
        <CommandInput>
          Command:
          <input aria-label="Command" />
        </CommandInput>
        <HScroll>
          <button aria-label="Scroll left">
            <svg width="6" height="8" viewBox="0 0 6 8">
              <path d="M5 1L2 4l3 3" fill="none" stroke="#333" strokeWidth="1.5" />
            </svg>
          </button>
          <span />
          <button aria-label="Scroll right">
            <svg width="6" height="8" viewBox="0 0 6 8">
              <path d="M1 1l3 3-3 3" fill="none" stroke="#333" strokeWidth="1.5" />
            </svg>
          </button>
        </HScroll>
      </CommandRow>
    </CommandBox>
  </CommandDock>
);

const App = () => (
  <>
    <GlobalStyle />
    <Window>
      <TitleBar>
        <Icon name="app" size={12} />
        <Title>AutoCAD 2007 - [C:\Users\Admin\Documents\Zalo Received Files\BAN DO DCQHSDD 2020- ngay 25-7-2019=nen.dwg]</Title>
        <WindowButtons $gap={28}>
          <PlainButton aria-label="Minimize">
            <svg width="10" height="10" viewBox="0 0 10 10">
              <path d="M1 5.5h8" stroke="#222" />
            </svg>
          </PlainButton>
          <PlainButton aria-label="Restore">
            <svg width="10" height="10" viewBox="0 0 10 10">
              <path d="M1.5 3.5h5v5h-5zM3.5 3V1.5h5v5H7" fill="none" stroke="#222" />
            </svg>
          </PlainButton>
          <PlainButton aria-label="Close">
            <svg width="10" height="10" viewBox="0 0 10 10">
              <path d="M1 1l8 8M9 1L1 9" stroke="#222" />
            </svg>
          </PlainButton>
        </WindowButtons>
      </TitleBar>
      <MenuBar>
        <Icon name="drawing" size={13} />
        <MenuList>
          {menus.map((menu) => (
            <PlainButton key={menu}>{menu}</PlainButton>
          ))}
        </MenuList>
        <WindowButtons $gap={8}>
          <PlainButton aria-label="Minimize drawing">
            <svg width="8" height="8" viewBox="0 0 8 8">
              <path d="M2 6.5h4" stroke="#333" />
            </svg>
          </PlainButton>
          <PlainButton aria-label="Restore drawing">
            <svg width="8" height="8" viewBox="0 0 8 8">
              <path d="M1.5 3.5h4v4h-4zM3 1.5h4v4" fill="none" stroke="#555" />
            </svg>
          </PlainButton>
          <PlainButton aria-label="Close drawing">
            <svg width="8" height="8" viewBox="0 0 8 8">
              <path d="M1 1l6 6M7 1L1 7" stroke="#333" />
            </svg>
          </PlainButton>
        </WindowButtons>
      </MenuBar>
      <StandardToolbar />
      <PropertiesToolbar />
      <LayersToolbar />
      <WorkArea>
        <PropertyPalette />
        <RightColumn>
          <DrawingRow>
            <SideTools $end={6}>
              <SideGrip />
              {drawTools.map((name) => (
                <SideTool key={name} name={name} />
              ))}
            </SideTools>
            <Drawing>
              <FileTabs>
                <FileTab>to28.dwg</FileTab>
                <FileTab $active>BAN DO DCQHSDD 2020- ngay 25-7-2019=nen.dwg</FileTab>
              </FileTabs>
              <Canvas>
                <MapDrawing />
              </Canvas>
              <LayoutTabs>
                {navShapes.map((d) => (
                  <NavButton key={d} aria-label="Browse layouts">
                    <svg width="9" height="9" viewBox="0 0 10 10">
                      <path d={d} fill="#111" stroke="#111" />
                    </svg>
                  </NavButton>
                ))}
                <LayoutTab $active>
                  <span>Model</span>
                </LayoutTab>
                <LayoutTab>
                  <span>Layout1</span>
                </LayoutTab>
              </LayoutTabs>
            </Drawing>
            <SideTools $end={2}>
              <SideGrip />
              {modifyTools.map((name) => (
                <SideTool key={name} name={name} />
              ))}
              <SideGrip $gap={7} />
              {orderTools.map((name) => (
                <SideTool key={name} name={name} />
              ))}
            </SideTools>
          </DrawingRow>
          <CommandWindow />
        </RightColumn>
      </WorkArea>
      <StatusBar>
        <Coordinates>589587.4120, 1212026.5354, 0.0000</Coordinates>
        <Toggles>
          {toggles.map(([name, on]) => (
            <Toggle key={name} $on={on} aria-pressed={on}>
              {name}
            </Toggle>
          ))}
        </Toggles>
        <StatusTray>
          <Icon name="comm" />
          <Icon name="lock" />
          <Icon name="trusted" />
          <ToolButton $width={16} aria-label="Status menu">
            <SmallArrow />
          </ToolButton>
          <Icon name="clean" />
        </StatusTray>
      </StatusBar>
      <TaskBar>
        <TaskButton aria-label="Start">
          <Icon name="windows" />
        </TaskButton>
        <TaskButton aria-label="Task view">
          <Icon name="taskview" />
        </TaskButton>
        <TaskButton aria-label="File explorer">
          <Icon name="explorer" size={18} />
        </TaskButton>
        <TaskButton aria-label="Chrome">
          <Icon name="chrome" size={20} />
        </TaskButton>
        <TaskButton aria-label="Blocks">
          <Icon name="blocks" size={18} />
        </TaskButton>
        <TaskButton>
          <ZaloMark>Zalo</ZaloMark>
        </TaskButton>
        <TaskButton $active aria-label="AutoCAD">
          <Icon name="cad" size={20} />
        </TaskButton>
        <Spacer />
        <TaskButton $width={22} aria-label="Hidden icons">
          <Icon name="up" size={12} />
        </TaskButton>
        <TaskButton $width={22} aria-label="Network">
          <Icon name="wifi" size={12} />
        </TaskButton>
        <Language>ENG</Language>
        <Clock>
          <span>3:19 PM</span>
          <span>5/20/2024</span>
        </Clock>
        <TaskButton aria-label="Notifications">
          <Icon name="chat" />
        </TaskButton>
      </TaskBar>
    </Window>
  </>
);

export default App;
